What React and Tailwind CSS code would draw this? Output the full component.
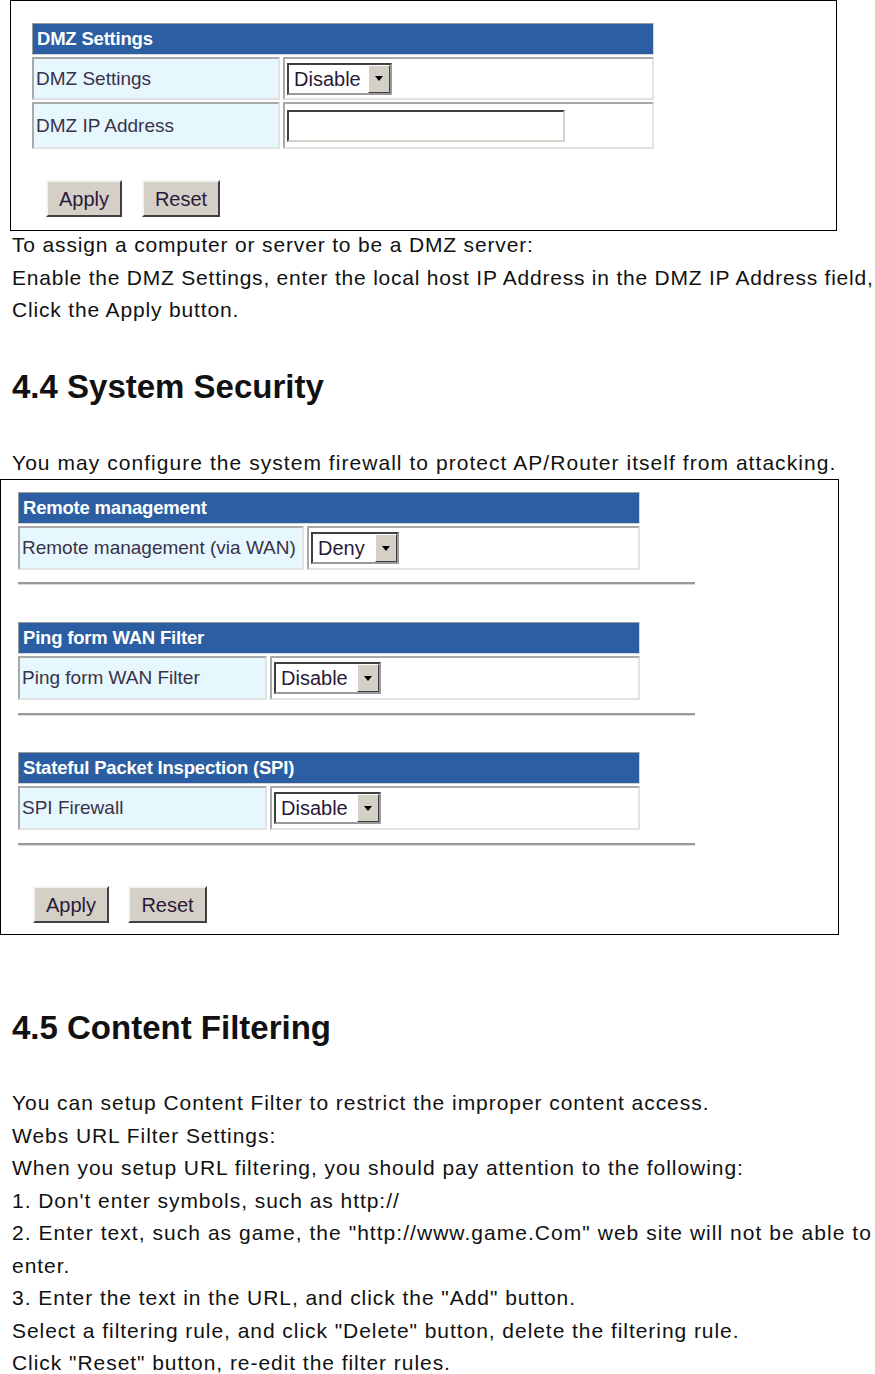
const uiFont = "font-['Liberation_Sans',Arial,sans-serif]";

const Header = ({ children }) => (
  <div className="h-[32px] bg-[#2b5ea2] border border-t-[#9c9c9c] border-l-[#9c9c9c] border-b-[#d6d6d6] border-r-[#d6d6d6] flex items-center pl-[4px] text-white font-bold text-[18.5px] tracking-[-0.2px]">
    {children}
  </div>
);

const Row = ({ label, labelW, h, children }) => (
  <div className={`flex gap-[3px] mt-[2px] ${h}`}>
    <div
      className={`${labelW} bg-[#e6f7fe] border-2 border-t-[#a9a9a9] border-l-[#a9a9a9] border-b-[#e2e2e2] border-r-[#e2e2e2] flex items-center pl-[2px] pt-[1px] text-[19px] text-[#3a3248] whitespace-nowrap`}
    >
      {label}
    </div>
    <div className="flex-1 bg-white border-2 border-t-[#a9a9a9] border-l-[#a9a9a9] border-b-[#e2e2e2] border-r-[#e2e2e2] flex items-center pl-[2px]">
      {children}
    </div>
  </div>
);

const Select = ({ value, w }) => (
  <div className={`flex h-[32px] ${w} border-2 border-t-[#404040] border-l-[#404040] border-b-[#9a9a9a] border-r-[#9a9a9a] bg-white`}>
    <span className="pl-[5px] flex items-center text-[20px] text-[#2a1a3a]">{value}</span>
    <div className="ml-auto w-[22px] bg-[#d4d0c8] border border-t-white border-l-white border-b-[#404040] border-r-[#404040] flex items-center justify-center">
      <div className="w-0 h-0 border-l-[4px] border-r-[4px] border-t-[5px] border-l-transparent border-r-transparent border-t-black" />
    </div>
  </div>
);

const Button = ({ children, w }) => (
  <div className={`${w} h-[37px] bg-[#d4d0c8] border-2 border-t-[#f4f4f4] border-l-[#f4f4f4] border-b-[#404040] border-r-[#404040] flex items-center justify-center text-[20px] text-[#2a1a3a]`}>
    {children}
  </div>
);

const Rule = () => (
  <div className="w-[677px] h-[3px] border-t-2 border-t-[#9a9a9a] border-b border-b-[#dadada]" />
);

const Line = ({ children }) => <p className="whitespace-nowrap">{children}</p>;

export default function App() {
  return (
    <div className="w-[875px] bg-white text-[#111] overflow-hidden">
      {/* DMZ screenshot */}
      <div className={`${uiFont} ml-[10px] w-[827px] border border-black pt-[22px] pl-[21px] pb-[13px]`}>
        <div className="w-[622px]">
          <Header>DMZ Settings</Header>
          <Row label="DMZ Settings" labelW="w-[248px]" h="h-[43px]">
            <Select value="Disable" w="w-[105px]" />
          </Row>
          <Row label="DMZ IP Address" labelW="w-[248px]" h="h-[47px]">
            <div className="w-[278px] h-[32px] border-2 border-t-[#404040] border-l-[#404040] border-b-[#d4d0c8] border-r-[#d4d0c8] bg-white" />
          </Row>
        </div>
        <div className="flex gap-[20px] mt-[31px] ml-[14px]">
          <Button w="w-[76px]">Apply</Button>
          <Button w="w-[78px]">Reset</Button>
        </div>
      </div>

      <div className="-mt-[2px] font-['Liberation_Sans',Arial,sans-serif] text-[21px] tracking-[0.84px] leading-[32.5px] pl-[12px]">
        <Line>To assign a computer or server to be a DMZ server:</Line>
        <p className="whitespace-nowrap tracking-[0.78px]">
          Enable the DMZ Settings, enter the local host IP Address in the DMZ IP Address field,
        </p>
        <Line>Click the Apply button.</Line>
        <h2 className="mt-[40px] text-[33px] font-bold leading-[40px] tracking-normal">4.4 System Security</h2>
        <p className="mt-[40px] whitespace-nowrap tracking-[1.05px]">
          You may configure the system firewall to protect AP/Router itself from attacking.
        </p>
      </div>

      {/* System security screenshot */}
      <div className={`${uiFont} w-[839px] border border-black pt-[12px] pl-[17px] pb-[11px]`}>
        <div className="w-[622px]">
          <Header>Remote management</Header>
          <Row label="Remote management (via WAN)" labelW="w-[286px]" h="h-[44px]">
            <Select value="Deny" w="w-[88px]" />
          </Row>
        </div>
        <div className="mt-[12px]">
          <Rule />
        </div>

        <div className="w-[622px] mt-[37px]">
          <Header>Ping form WAN Filter</Header>
          <Row label="Ping form WAN Filter" labelW="w-[249px]" h="h-[44px]">
            <Select value="Disable" w="w-[107px]" />
          </Row>
        </div>
        <div className="mt-[13px]">
          <Rule />
        </div>

        <div className="w-[622px] mt-[36px]">
          <Header>Stateful Packet Inspection (SPI)</Header>
          <Row label="SPI Firewall" labelW="w-[249px]" h="h-[44px]">
            <Select value="Disable" w="w-[107px]" />
          </Row>
        </div>
        <div className="mt-[13px]">
          <Rule />
        </div>

        <div className="flex gap-[19px] mt-[40px] ml-[15px]">
          <Button w="w-[76px]">Apply</Button>
          <Button w="w-[79px]">Reset</Button>
        </div>
      </div>

      <div className="font-['Liberation_Sans',Arial,sans-serif] text-[21px] tracking-[0.95px] leading-[32.5px] pl-[12px] pb-[10px]">
        <h2 className="mt-[73px] text-[33px] font-bold leading-[40px] tracking-normal">4.5 Content Filtering</h2>
        <div className="mt-[39px]">
          <Line>You can setup Content Filter to restrict the improper content access.</Line>
          <Line>Webs URL Filter Settings:</Line>
          <Line>When you setup URL filtering, you should pay attention to the following:</Line>
          <Line>1. Don't enter symbols, such as http://</Line>
          <p className="whitespace-nowrap tracking-[1.04px]">
            2. Enter text, such as game, the "http://www.game.Com" web site will not be able to
          </p>
          <Line>enter.</Line>
          <Line>3. Enter the text in the URL, and click the "Add" button.</Line>
          <Line>Select a filtering rule, and click "Delete" button, delete the filtering rule.</Line>
          <Line>Click "Reset" button, re-edit the filter rules.</Line>
        </div>
      </div>
    </div>
  );
}
